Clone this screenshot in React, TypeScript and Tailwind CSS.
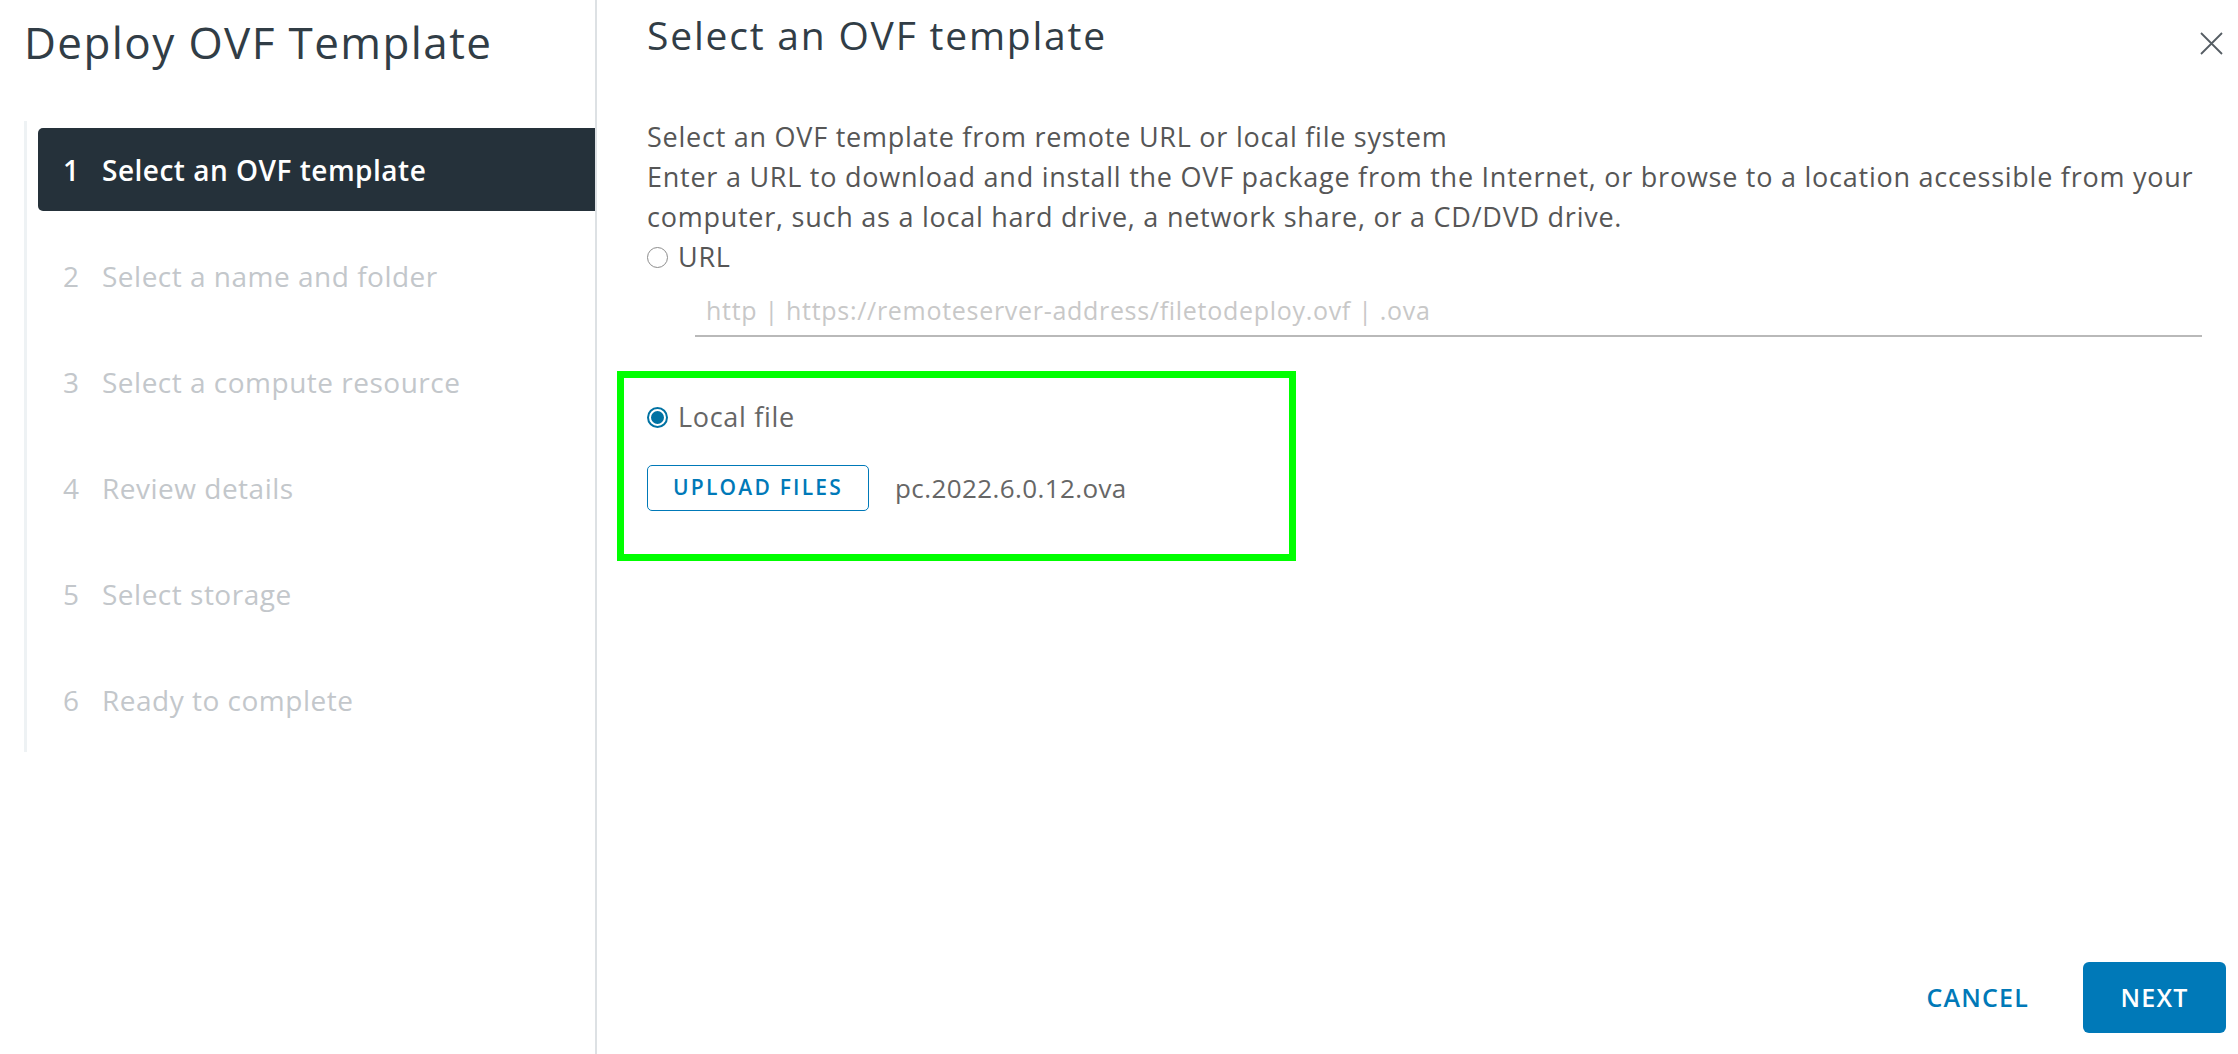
import React from 'react';

const steps = [
    'Select an OVF template',
    'Select a name and folder',
    'Select a compute resource',
    'Review details',
    'Select storage',
    'Ready to complete',
];

function Radio({ checked }: { checked: boolean }) {
    if (checked) {
        return (
            <span className="w-[21px] h-[21px] rounded-full bg-[#0072a3] border-[2px] border-[#0072a3] flex items-center justify-center shrink-0">
                <span className="w-[17px] h-[17px] rounded-full border-[2px] border-white bg-[#0072a3]" />
            </span>
        );
    }
    return <span className="w-[21px] h-[21px] rounded-full border-[1.5px] border-[#8c8c8c] bg-white shrink-0" />;
}

export default function App() {
    return (
        <div className="w-[2238px] h-[1054px] flex bg-white text-[#565656]" style={{ fontFamily: '"Open Sans", "Liberation Sans", sans-serif' }}>
            {/* wizard steps */}
            <div className="w-[597px] shrink-0 border-r-2 border-[#dde1e4] flex flex-col">
                <h1 className="pl-[24px] pt-[16px] h-[121px] text-[44px] leading-[52px] text-[#313d46] tracking-[1.4px]">Deploy OVF Template</h1>
                <div className="ml-[24px] border-l-[3px] border-[#eef2f4] pt-[7px] pb-[11px] flex flex-col gap-[23px]">
                    {steps.map((s, i) => (
                        <div
                            key={s}
                            className={`ml-[11px] h-[83px] flex items-center pl-[25px] gap-[22px] text-[28px] tracking-[0.5px] ${i === 0 ? 'bg-[#25313a] rounded-l-[5px] text-white font-semibold' : 'text-[#c3c7cb]'}`}
                        >
                            <span className="w-[17px]">{i + 1}</span>
                            <span>{s}</span>
                        </div>
                    ))}
                </div>
            </div>

            {/* content */}
            <div className="flex-1 flex flex-col pl-[50px]">
                <div className="flex justify-between items-start pt-[12px] pr-[15px]">
                    <h2 className="text-[39px] leading-[46px] text-[#313d46] tracking-[1.8px]">Select an OVF template</h2>
                    <svg width="23" height="23" viewBox="0 0 23 23" className="mt-[20px] text-[#555d63]">
                        <path d="M1 1 L22 22 M22 1 L1 22" stroke="currentColor" strokeWidth="1.8" fill="none" />
                    </svg>
                </div>

                <div className="mt-[59px] text-[27px] leading-[40px] tracking-[0.75px] text-[#565656]">
                    <p>Select an OVF template from remote URL or local file system</p>
                    <p>Enter a URL to download and install the OVF package from the Internet, or browse to a location accessible from your</p>
                    <p>computer, such as a local hard drive, a network share, or a CD/DVD drive.</p>
                    <label className="flex items-center gap-[10px] h-[40px]">
                        <Radio checked={false} />
                        <span>URL</span>
                    </label>
                </div>

                <div className="ml-[48px] mr-[36px] mt-[10px] h-[50px] border-b-2 border-[#b9b9b9] flex items-center pl-[11px] text-[25px] tracking-[0.7px] text-[#c8c8c8]">
                    http | https://remoteserver-address/filetodeploy.ovf | .ova
                </div>

                <div className="-ml-[30px] mt-[34px] w-[679px] border-[7px] border-[#00ff00] pl-[23px] pt-[19px] pb-[43px]">
                    <label className="flex items-center gap-[10px] h-[40px] text-[27px] tracking-[0.7px]">
                        <Radio checked={true} />
                        <span className="text-[#666]">Local file</span>
                    </label>
                    <div className="mt-[28px] flex items-center gap-[26px]">
                        <button className="w-[222px] h-[46px] border-[1.5px] border-[#0079b8] rounded-[5px] text-[#0079b8] text-[21px] font-semibold tracking-[2.2px]">
                            UPLOAD FILES
                        </button>
                        <span className="text-[26px] tracking-[0.4px] text-[#666]">pc.2022.6.0.12.ova</span>
                    </div>
                </div>

                <div className="mt-auto flex justify-end items-center pr-[12px] pb-[21px] gap-[54px]">
                    <button className="text-[25px] font-semibold tracking-[1.2px] text-[#0079b8]">CANCEL</button>
                    <button className="w-[143px] h-[71px] rounded-[6px] bg-[#0079b8] text-white text-[25px] font-semibold tracking-[1.2px]">NEXT</button>
                </div>
            </div>
        </div>
    );
}
